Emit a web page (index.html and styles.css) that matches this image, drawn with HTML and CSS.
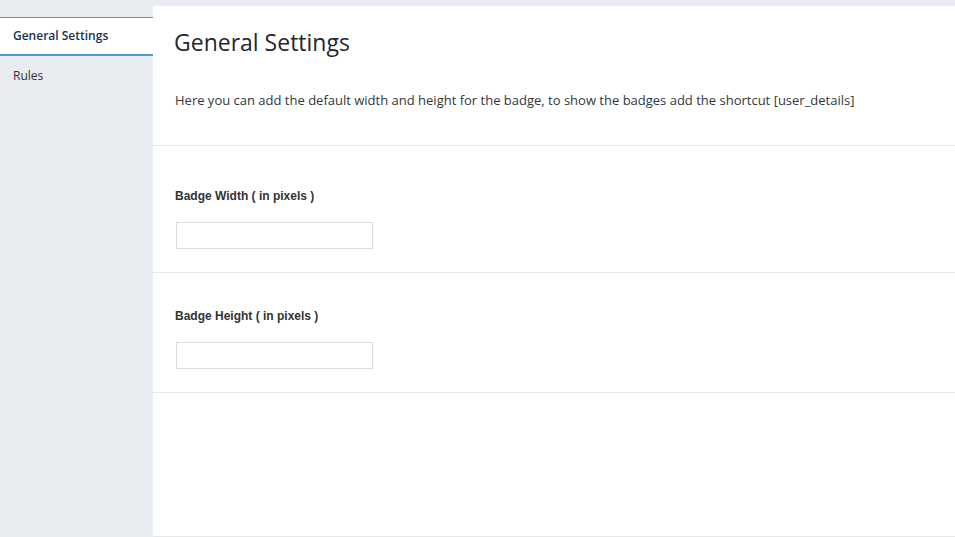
FILE: index.html
```html
<!DOCTYPE html>
<html>
<head>
<meta charset="utf-8">
<link rel="stylesheet" href="styles.css">
</head>
<body>
<div class="layout">
  <nav class="sidebar">
    <a class="tab active">General Settings</a>
    <a class="tab">Rules</a>
  </nav>
  <main class="panel">
    <header class="intro">
      <h1 class="title">General Settings</h1>
      <p class="desc">Here you can add the default width and height for the badge, to show the badges add the shortcut [user_details]</p>
    </header>
    <section class="field first">
      <label class="label">Badge Width ( in pixels )</label>
      <input class="input" type="text">
    </section>
    <section class="field">
      <label class="label">Badge Height ( in pixels )</label>
      <input class="input" type="text">
    </section>
  </main>
</div>
</body>
</html>
```
FILE: styles.css
```css
html, body {
  margin: 0;
  padding: 0;
  background: #e9ecf1;
  height: 100%;
}
.layout {
  display: flex;
  height: 537px;
}
.sidebar {
  width: 153px;
  flex: none;
  padding-top: 17px;
  display: flex;
  flex-direction: column;
  font-family: "Open Sans", sans-serif;
}
.tab {
  display: block;
  height: 40px;
  line-height: 40px;
  padding-left: 13px;
  font-size: 12px;
  color: #2c3338;
  box-sizing: border-box;
}
.tab.active {
  height: 39px;
  background: #fff;
  border-top: 1px solid #4a9bd6;
  border-bottom: 2px solid #4a9bd6;
  color: #16324f;
  font-weight: 600;
  line-height: 35px;
}
.panel {
  flex: 1;
  margin-top: 6px;
  height: 531px;
  background: #fff;
  border-bottom: 1px solid #e6e8eb;
  box-sizing: border-box;
}
.intro {
  padding: 21px 21px 36px 21px;
  border-bottom: 1px solid #e8e8e8;
}
.title {
  margin: 0;
  font-family: "Open Sans", sans-serif;
  font-weight: 400;
  font-size: 23px;
  line-height: 30px;
  color: #23282d;
}
.desc {
  margin: 34px 0 0 1px;
  font-family: "Open Sans", sans-serif;
  font-size: 13px;
  line-height: 18px;
  color: #32373c;
}
.field {
  display: flex;
  flex-direction: column;
  align-items: flex-start;
  padding: 36px 22px 23px 22px;
  border-bottom: 1px solid #e8e8e8;
}
.field.first {
  padding-top: 43px;
}
.label {
  font-family: "Liberation Sans", Arial, sans-serif;
  font-weight: 700;
  font-size: 12px;
  line-height: 14px;
  color: #333;
}
.input {
  margin: 19px 0 0 1px;
  width: 197px;
  height: 27px;
  box-sizing: border-box;
  border: 1px solid #dcdcdc;
  background: #fff;
  padding: 3px 6px;
  outline: none;
}
```
